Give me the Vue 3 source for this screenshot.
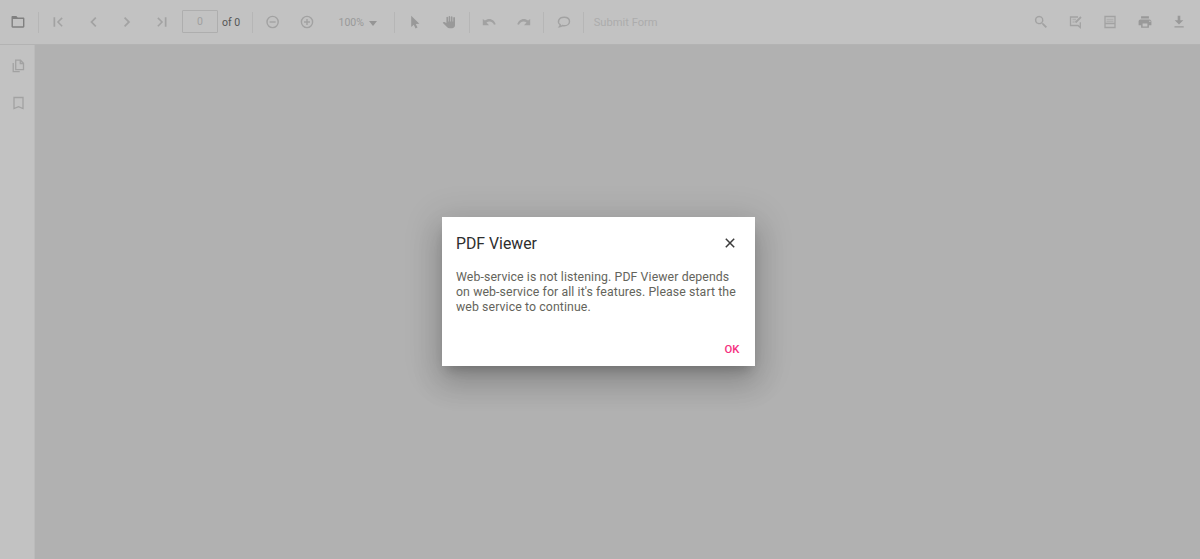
<script setup>
import { ref } from 'vue'

const page = ref('0')

/* Every icon is drawn on a 16 x 16 grid. */
const icons = {
  open: 'M2.1 2h4.3l1.3 1.4h5.600c.7 0 1.1.5 1.1 1.1v8c0 .7-.5 1.200-1.100 1.200H2.600c-.6 0-1.100-.5-1.100-1.200V3.200C1.500 2.500 1.700 2 2.100 2zm.8 3.100v7.200h10.100V5.100z',
  first: 'M3.500 3.300h1.700v9.500H3.500zM11.600 3.300l1.100 1.100L9 8.050l3.700 3.650-1.100 1.100L6.900 8.050z',
  prev: 'M10.200 3.100l1.200 1.200-3.700 3.750 3.700 3.750-1.200 1.200-4.950-4.950z',
  next: 'M6.200 3.100L5 4.300l3.700 3.750L5 11.800l1.200 1.200 4.950-4.950z',
  last: 'M12.500 3.300h-1.700v9.500h1.700zM4.400 3.300L3.300 4.400 7 8.050 3.300 11.700l1.100 1.100 4.700-4.750z',
  select: 'M4.200 1.700v11.200l2.600-2.200 1.700 3.700 2-.9-1.700-3.600 3.600-.1z',
  hand: 'M14 4v7.300c0 1.700-1.300 2.900-3 2.900H8.300c-.8 0-1.500-.3-2.100-.9L1.700 8.800l.7-.6c.3-.2.700-.2 1-.1l2 .9V3.500c0-1.100 1.600-1.100 1.600 0v3.900h.6V2.700c0-1.100 1.600-1.100 1.600 0v4.700h.7V3c0-1.100 1.600-1.100 1.600 0v4.400h.7V4c0-1.200 1.800-1.200 1.800 0z',
  undo: 'M8.300 5.100c-1.700 0-3.200.6-4.400 1.500L1.800 5v6.200H8L5.500 8.600c.8-.7 1.800-1.100 3-1.100 2.100 0 3.900 1.400 4.500 3.300l1.700-.5C13.800 7.400 11.300 5.100 8.300 5.100z',
  redo: 'M7.700 5.100c1.700 0 3.200.6 4.400 1.500L14.200 5v6.200H8l2.500-2.600c-.8-.7-1.800-1.100-3-1.100-2.100 0-3.900 1.400-4.500 3.300l-1.700-.5c.9-2.900 3.400-5.200 6.400-5.200z',
  search: 'M6.200 1.700a4.300 4.300 0 1 0 2.600 7.700l.4.400v.8l3.500 3.500 1.300-1.300-3.500-3.500h-.8l-.4-.4A4.300 4.300 0 0 0 6.200 1.700zm0 1.500a2.850 2.850 0 1 1 0 5.700 2.850 2.850 0 0 1 0-5.700z',
  print: 'M4.100 2.300h7.800v2.300H4.100zM3.600 5.400h8.800c1.100 0 2 .8 2 1.900v3.900h-2.500v2.500H4.100v-2.500H1.600V7.300c0-1.100.9-1.900 2-1.900zm2 4v3h4.800v-3zm6.700-2.600v1.200h1.200V6.800z',
  download: 'M6.700 1.700h2.600v4.500h3L8 10.500 3.700 6.200h3zM3.500 12.200h9.200v1.400H3.500z'
}

const pager = ['first', 'prev', 'next', 'last']
</script>

<template>
  <div class="viewer">
    <header class="toolbar">
      <button class="tool enabled lead"><svg viewBox="0 0 16 16"><path fill-rule="evenodd" :d="icons.open" /></svg></button>
      <i class="sep"></i>
      <button v-for="name in pager" :key="name" class="tool pager"><svg viewBox="0 0 16 16"><path :d="icons[name]" /></svg></button>
      <input v-model="page" class="page" />
      <span class="total">of 0</span>
      <i class="sep"></i>
      <button class="tool">
        <svg viewBox="0 0 16 16" class="line"><circle cx="7.600" cy="8" r="5.600" /><path d="M4.600 8h6" /></svg>
      </button>
      <button class="tool">
        <svg viewBox="0 0 16 16" class="line"><circle cx="8" cy="8" r="5.600" /><path d="M5 8h6M8 5v6" /></svg>
      </button>
      <div class="zoom"><span>100%</span><b class="caret"></b></div>
      <i class="sep"></i>
      <button class="tool solid"><svg viewBox="0 0 16 16"><path :d="icons.select" /></svg></button>
      <button class="tool solid"><svg viewBox="0 0 16 16"><path :d="icons.hand" /></svg></button>
      <i class="sep"></i>
      <button class="tool"><svg viewBox="0 0 16 16"><path :d="icons.undo" /></svg></button>
      <button class="tool"><svg viewBox="0 0 16 16"><path :d="icons.redo" /></svg></button>
      <i class="sep"></i>
      <button class="tool">
        <svg viewBox="0 0 16 16" class="line"><path d="M4.200 10.700C1 8.500 2.300 3.200 8.100 3.200c3.500 0 5.400 1.900 5.400 4.200s-2.200 4.300-5.400 4.300c-.8 0-1.300-.1-1.700-.2-.9.900-1.900 1.200-3 1.200.6-.6.900-1.200.8-2z" /></svg>
      </button>
      <i class="sep"></i>
      <span class="submit">Submit Form</span>

      <div class="right">
        <button class="tool"><svg viewBox="0 0 16 16"><path fill-rule="evenodd" :d="icons.search" /></svg></button>
        <button class="tool">
          <svg viewBox="0 0 16 16" class="line thin"><path d="M10 3H2.500v8.500h7.500l2.300 2V8.300" /><path class="faint" d="M4.500 5.500H8M4.500 8h2.200" /><path class="pen" d="M7.500 8.500l5.500-5.500" /></svg>
        </button>
        <button class="tool">
          <svg viewBox="0 0 16 16" class="line thin"><path d="M3 2.500h10v11H3zM3 9.500h10" /><path class="faint" d="M4.500 5.500h7M4.500 7.500h7" /></svg>
        </button>
        <button class="tool solid"><svg viewBox="0 0 16 16"><path fill-rule="evenodd" :d="icons.print" /></svg></button>
        <button class="tool solid"><svg viewBox="0 0 16 16"><path :d="icons.download" /></svg></button>
      </div>
    </header>

    <div class="body">
      <nav class="side">
        <button class="tool">
          <svg viewBox="0 0 16 16" class="line thin"><path d="M5.700 2.200h4.800l3 3v6.500H5.700zM10.300 2.500v3h3M3.200 5v8.700h6.500" /></svg>
        </button>
        <button class="tool">
          <svg viewBox="0 0 16 16" class="line thin"><path d="M4 2.500h9v11l-4.500-1.900L4 13.500z" /></svg>
        </button>
      </nav>
      <main class="canvas"></main>
    </div>

    <div class="overlay">
      <section class="dialog" role="dialog">
        <div class="head">
          <h1>PDF Viewer</h1>
          <button class="close"><svg viewBox="0 0 10 10"><path d="M.8.800l8.400 8.400M9.200.800L.8 9.200" /></svg></button>
        </div>
        <p>Web-service is not listening. PDF Viewer depends<br />on web-service for all it's features. Please start the<br />web service to continue.</p>
        <button class="ok">OK</button>
      </section>
    </div>
  </div>
</template>

<style>
body {
  margin: 0;
  overflow: hidden;
}
</style>

<style scoped>
.viewer {
  position: relative;
  display: flex;
  flex-direction: column;
  height: 559px;
  font-family: Roboto, "Liberation Sans", sans-serif;
  background: #b1b1b1;
}
button {
  padding: 0;
  border: 0;
  background: none;
  font-family: inherit;
}
.toolbar {
  display: flex;
  align-items: center;
  box-sizing: border-box;
  height: 45px;
  flex: none;
  background: #c2c2c2;
  border-bottom: 1px solid #b3b3b3;
}
.tool {
  display: flex;
  align-items: center;
  justify-content: center;
  flex: none;
  width: 34.5px;
  height: 44px;
}
.lead {
  margin-left: 1.25px;
}
.pager {
  padding-right: 0.9px;
  box-sizing: border-box;
}
.tool svg {
  flex: none;
  width: 16px;
  height: 16px;
  fill: #a2a2a2;
}
.lead svg {
  margin-right: 1px;
}
.tool.solid svg {
  fill: #999;
}
.tool.enabled svg {
  fill: #808080;
}
.tool svg.line {
  fill: none;
  stroke: #a2a2a2;
  stroke-width: 1.4;
}
.tool svg.thin {
  stroke-width: 1.3;
}
.tool svg .pen {
  stroke-width: 1.8;
}
.tool svg .faint {
  stroke: #b0b0b0;
}
.sep {
  flex: none;
  width: 1px;
  height: 21px;
  margin: 0 2.25px;
  background: #b6b6b6;
}
.page {
  box-sizing: border-box;
  width: 36px;
  height: 23px;
  margin: 0 4px 1px 2.800px;
  padding: 0;
  border: 1px solid #aeaeae;
  border-radius: 1px;
  background: transparent;
  color: #a0a0a0;
  font: 10.5px Roboto, sans-serif;
  text-align: center;
}
.total {
  width: 28px;
  color: #555;
  font-size: 10.5px;
}
.zoom {
  display: flex;
  align-items: center;
  box-sizing: border-box;
  width: 67.700px;
  padding-left: 14px;
  color: #999;
  font-size: 10.5px;
}
.zoom span {
  width: 30.500px;
}
.caret {
  margin-top: 2px;
  border: 4.500px solid transparent;
  border-width: 5px 4.500px 0;
  border-top-color: #959595;
}
.submit {
  margin-left: 7px;
  color: #acacac;
  font-size: 11.15px;
}
.right {
  display: flex;
  margin-left: auto;
  margin-right: 3.600px;
}
.body {
  display: flex;
  flex: 1;
}
.side {
  box-sizing: border-box;
  width: 35px;
  padding-top: 2px;
  background: #c2c2c2;
  border-right: 1px solid #bbb;
}
.side .tool {
  width: 36px;
  height: 37px;
}
.canvas {
  flex: 1;
}
.overlay {
  position: absolute;
  inset: 0;
}
.dialog {
  box-sizing: border-box;
  width: 313px;
  height: 149px;
  margin: 217px 0 0 442px;
  padding: 16px 14px 0;
  background: #fff;
  box-shadow: 0 8px 11px -5px rgba(0, 0, 0, 0.2), 0 17px 27px 2px rgba(0, 0, 0, 0.14), 0 6px 33px 6px rgba(0, 0, 0, 0.12);
}
.head {
  display: flex;
  align-items: center;
  justify-content: space-between;
  height: 20px;
}
h1 {
  margin: 0;
  color: #2e2e2e;
  font-size: 15.800px;
  font-weight: 400;
}
.close {
  display: flex;
  margin: 0 6.500px 1px 0;
}
.close svg {
  width: 10px;
  height: 10px;
  stroke: #3b3b3b;
  stroke-width: 1.5;
}
p {
  margin: 16.500px 0 0;
  color: #64645b;
  font-size: 12.3px;
  line-height: 15px;
  letter-spacing: 0.1px;
  white-space: nowrap;
}
.ok {
  display: block;
  margin: 28.500px 1.500px 0 auto;
  color: #f5317f;
  font-size: 11.3px;
  font-weight: 500;
  line-height: 14px;
}
</style>
